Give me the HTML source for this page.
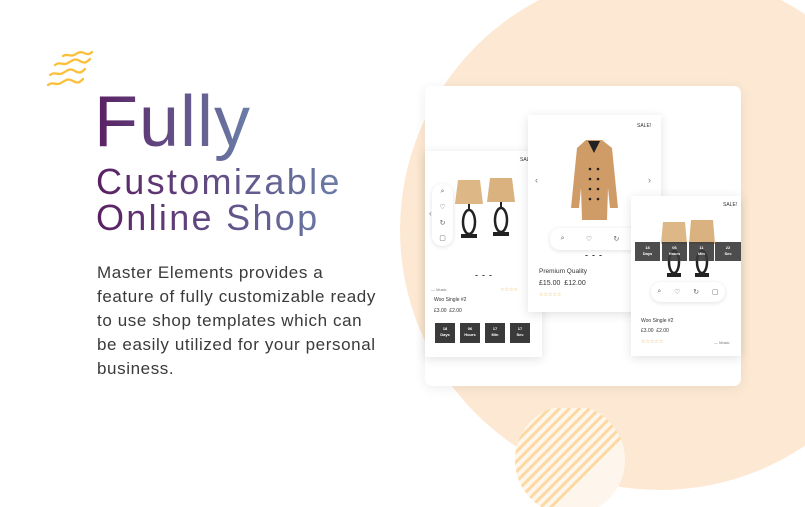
<!DOCTYPE html>
<html><head><style>
*{margin:0;padding:0;box-sizing:border-box}
body{width:805px;height:507px;overflow:hidden;background:#fff;font-family:"Liberation Sans",sans-serif;position:relative}
.abs{position:absolute}
.grad{background:linear-gradient(90deg,#5a1f62,#6a7fa8);-webkit-background-clip:text;background-clip:text;color:transparent}
.card{position:absolute;background:#fff;box-shadow:0 2px 10px rgba(0,0,0,.12)}
.t{position:absolute;font-size:5px;color:#333;white-space:nowrap}
.cd{position:absolute;background:#3a3a3a;color:#fff;font-size:4px;text-align:center;font-weight:bold;line-height:6px;padding-top:3px}
.ic{position:absolute;background:#fff;border-radius:10px;box-shadow:0 1px 5px rgba(0,0,0,.12);color:#666;font-size:7px;display:flex;justify-content:space-around;align-items:center}
</style></head><body>
<div class="abs" style="left:400px;top:-30px;width:520px;height:520px;border-radius:50%;background:#fde9d3"></div>
<svg class="abs" style="left:510px;top:408px" width="120" height="99">
<defs><clipPath id="c"><circle cx="60" cy="52" r="55"/></clipPath></defs>
<circle cx="60" cy="52" r="55" fill="#fef6ec"/>
<g clip-path="url(#c)" stroke="#fcd9a0" stroke-width="3">
<path d="M-60 100L40 0M-50 100L50 0M-40 100L60 0M-30 100L70 0M-20 100L80 0M-10 100L90 0M0 100L100 0M10 100L110 0M20 100L120 0M30 100L130 0M40 100L140 0"/>
</g></svg>
<svg class="abs" style="left:45px;top:50px" width="48" height="40" fill="none" stroke="#fbbf3c" stroke-width="2.3" stroke-linecap="round">
<path d="M18 6c4-3 7 1 11-1s6-4 10-2 6 1 8-1"/><path d="M10 15c5-4 8 1 13-2s7-5 12-2 7 1 10-2"/><path d="M5 25c5-4 8 1 13-2s7-5 12-2 7 1 10-2"/><path d="M3 35c5-4 8 1 13-2s7-5 12-2 7 1 10-2"/>
</svg>
<div class="abs grad" style="left:94px;top:82px;font-size:72px;line-height:80px;letter-spacing:1px">Fully</div>
<div class="abs grad" style="left:96px;top:164px;font-size:36px;line-height:36px;width:250px;letter-spacing:2.3px">Customizable<br>Online Shop</div>
<div class="abs" style="left:97px;top:261px;font-size:17px;line-height:24px;color:#3a3a3a;width:320px;white-space:nowrap;letter-spacing:0.6px">Master Elements provides a<br>feature of fully customizable ready<br>to use shop templates which can<br>be easily utilized for your personal<br>business.</div>

<div class="card" style="left:425px;top:86px;width:316px;height:300px;border-radius:7px;box-shadow:0 2px 12px rgba(0,0,0,.08)"></div>

<div class="card" style="left:425px;top:151px;width:117px;height:206px">
<div class="t" style="left:95px;top:6px">SALE!</div>
<svg class="abs" style="left:27px;top:25px" width="70" height="70">
<path d="M6 4h22l3 24H3z" fill="#ddb886"/><path d="M38 2h22l3 24H35z" fill="#d9b27f"/>
<path d="M17 28v6M49 26v6" stroke="#222" stroke-width="2"/>
<ellipse cx="17" cy="46" rx="6" ry="12" fill="none" stroke="#222" stroke-width="2.5"/><ellipse cx="49" cy="44" rx="6" ry="12" fill="none" stroke="#222" stroke-width="2.5"/>
<rect x="9" y="58" width="16" height="4" fill="#222"/><rect x="41" y="56" width="16" height="4" fill="#222"/></svg>
<div class="ic" style="left:7px;top:33px;width:21px;height:62px;flex-direction:column">⌕<span>♡</span><span>↻</span><span>▢</span></div>
<div class="t" style="left:4px;top:58px;font-size:8px;color:#777">‹</div>
<div class="abs" style="left:48px;top:123px;width:22px;height:3px;background:radial-gradient(#444 1px,transparent 1.5px) 0 0/7px 3px"></div>
<div class="t" style="left:6px;top:136px;color:#777;font-size:4px">— Music</div>
<div class="t" style="left:75px;top:136px;color:#e7a83c">☆☆☆☆</div>
<div class="t" style="left:9px;top:146px">Woo Single #2</div>
<div class="t" style="left:9px;top:157px">£3.00 &nbsp;£2.00</div>
<div class="cd" style="left:10px;top:172px;width:20px;height:20px">18<br>Days</div>
<div class="cd" style="left:35px;top:172px;width:20px;height:20px">06<br>Hours</div>
<div class="cd" style="left:60px;top:172px;width:20px;height:20px">17<br>Min</div>
<div class="cd" style="left:85px;top:172px;width:20px;height:20px">17<br>Sec</div>
</div>

<div class="card" style="left:528px;top:115px;width:133px;height:197px">
<div class="t" style="left:109px;top:8px">SALE!</div>
<svg class="abs" style="left:38px;top:20px" width="56" height="94"><path d="M20 5h16l10 8 4 40 2 20h-8l-2-20-1 32H16l-1-32-2 20H5l2-20 4-40z" fill="#cf9c68"/><path d="M22 6l6 12 6-12" fill="#222"/><g fill="#222"><circle cx="24" cy="34" r="1.3"/><circle cx="32" cy="34" r="1.3"/><circle cx="24" cy="44" r="1.3"/><circle cx="32" cy="44" r="1.3"/><circle cx="24" cy="54" r="1.3"/><circle cx="32" cy="54" r="1.3"/><circle cx="24" cy="64" r="1.3"/><circle cx="32" cy="64" r="1.3"/></g></svg>
<div class="t" style="left:7px;top:60px;font-size:9px;color:#777">‹</div><div class="t" style="left:120px;top:60px;font-size:9px;color:#777">›</div>
<div class="ic" style="left:22px;top:113px;width:108px;height:22px">⌕<span>♡</span><span>↻</span><span>▢</span></div>
<div class="abs" style="left:55px;top:139px;width:22px;height:3px;background:radial-gradient(#444 1px,transparent 1.5px) 0 0/7px 3px"></div>
<div class="t" style="left:11px;top:153px;font-size:6.5px">Premium Quality</div>
<div class="t" style="left:11px;top:165px;font-size:7px">£15.00 &nbsp;£12.00</div>
<div class="t" style="left:11px;top:177px;color:#e7a83c">☆☆☆☆☆</div>
</div>

<div class="card" style="left:631px;top:196px;width:110px;height:160px">
<div class="t" style="left:92px;top:6px">SALE!</div>
<svg class="abs" style="left:28px;top:20px" width="60" height="68">
<path d="M4 6h22l2 22H2z" fill="#ddb886"/><path d="M32 4h22l2 24H30z" fill="#d9b27f"/>
<ellipse cx="15" cy="46" rx="5" ry="11" fill="none" stroke="#222" stroke-width="2.5"/><ellipse cx="43" cy="46" rx="5" ry="11" fill="none" stroke="#222" stroke-width="2.5"/>
<rect x="8" y="57" width="14" height="4" fill="#222"/><rect x="36" y="57" width="14" height="4" fill="#222"/></svg>
<div class="cd" style="left:4px;top:46px;width:25px;height:19px;opacity:.9">18<br>Days</div>
<div class="cd" style="left:31px;top:46px;width:25px;height:19px;opacity:.9">06<br>Hours</div>
<div class="cd" style="left:58px;top:46px;width:25px;height:19px;opacity:.9">11<br>Min</div>
<div class="cd" style="left:84px;top:46px;width:26px;height:19px;opacity:.9">22<br>Sec</div>
<div class="ic" style="left:20px;top:86px;width:74px;height:20px">⌕<span>♡</span><span>↻</span><span>▢</span></div>
<div class="t" style="left:10px;top:122px">Woo Single #2</div>
<div class="t" style="left:10px;top:132px">£3.00 &nbsp;£2.00</div>
<div class="t" style="left:10px;top:143px;color:#e7a83c">☆☆☆☆☆</div>
<div class="t" style="left:83px;top:144px;color:#777;font-size:4px">— Music</div>
</div>
</body></html>
